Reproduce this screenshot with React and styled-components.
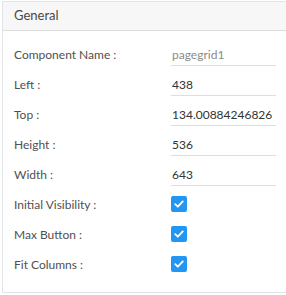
import React from 'react';
import styled, { createGlobalStyle } from 'styled-components';

const GlobalStyle = createGlobalStyle`
  body {
    margin: 0;
    background: #fff;
    overflow: hidden;
    font-family: 'Lato', 'Noto Sans', sans-serif;
  }
`;

const Panel = styled.div`
  margin: 1px 0 0 2px;
  border: 1px solid #e1e5ea;
  border-right: none;
`;

const Header = styled.div`
  height: 29px;
  display: flex;
  align-items: center;
  padding: 0 0 2px 11px;
  box-sizing: border-box;
  background: #f7f7f7;
  border-bottom: 1px solid #dcdcdc;
  font-size: 13px;
  color: #484848;
`;

const Body = styled.div`
  padding: 8px 0 13px 11px;
`;

const Row = styled.div`
  display: grid;
  grid-template-columns: 157px 105px;
  align-items: center;
  height: 30px;
`;

const Label = styled.span`
  font-size: 12px;
  color: #505050;
`;

const Field = styled.div`
  height: 22px;
  margin-top: 1px;
  display: flex;
  align-items: center;
  padding-left: 1px;
  border-bottom: 1px solid #dedede;
  font-size: 12px;
  color: ${(p) => (p.$muted ? '#8a8a8a' : '#333')};
`;

const Check = styled.span`
  width: 16px;
  height: 16px;
  border-radius: 2px;
  background: #2196f3;
  display: flex;
  align-items: center;
  justify-content: center;
`;

const fields = [
  { label: 'Component Name :', value: 'pagegrid1', muted: true },
  { label: 'Left :', value: '438' },
  { label: 'Top :', value: '134.00884246826' },
  { label: 'Height :', value: '536' },
  { label: 'Width :', value: '643' },
];

const checks = ['Initial Visibility :', 'Max Button :', 'Fit Columns :'];

const CheckMark = () => (
  <svg width="12" height="12" viewBox="0 0 12 12">
    <path d="M2.2 6.2 L4.8 8.7 L9.8 3.4" fill="none" stroke="#fff" strokeWidth="1.8" strokeLinecap="round" strokeLinejoin="round" />
  </svg>
);

export default function App() {
  return (
    <>
      <GlobalStyle />
      <Panel>
        <Header>General</Header>
        <Body>
          {fields.map((f) => (
            <Row key={f.label}>
              <Label>{f.label}</Label>
              <Field $muted={f.muted}>{f.value}</Field>
            </Row>
          ))}
          {checks.map((c) => (
            <Row key={c}>
              <Label>{c}</Label>
              <Check>
                <CheckMark />
              </Check>
            </Row>
          ))}
        </Body>
      </Panel>
    </>
  );
}
